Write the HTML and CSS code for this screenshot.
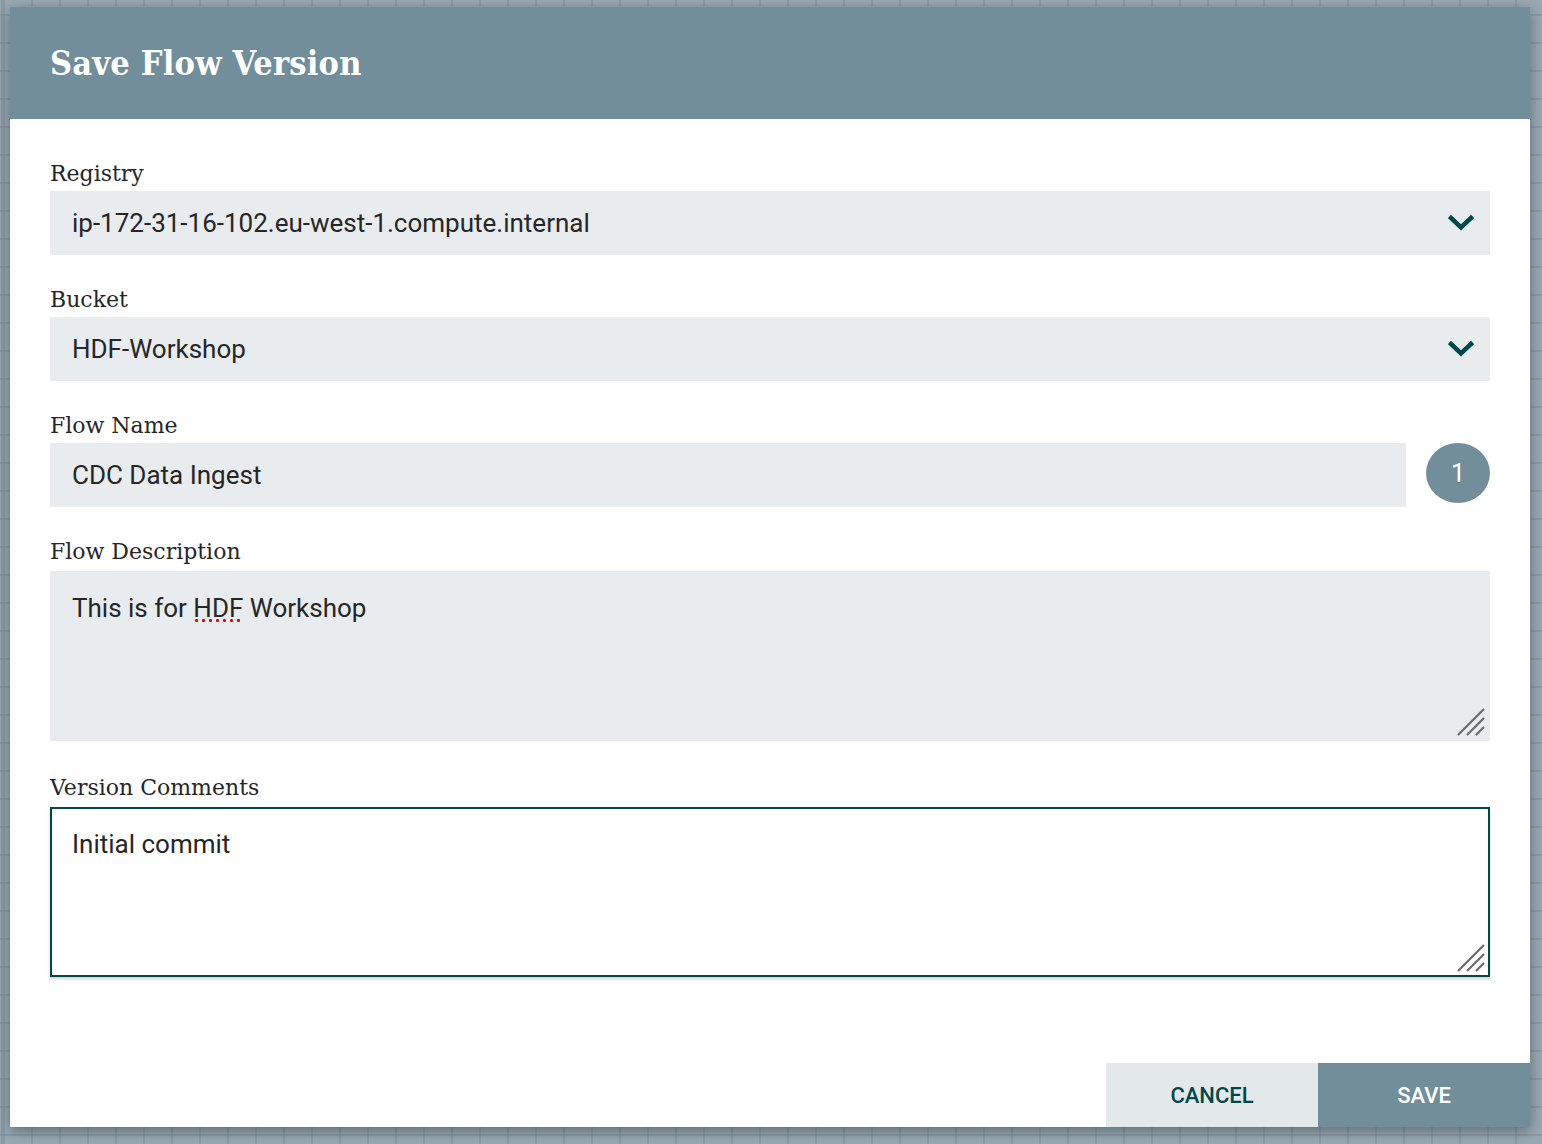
FILE: index.html
```html
<!DOCTYPE html>
<html>
<head>
<meta charset="utf-8">
<title>Save Flow Version</title>
<link rel="stylesheet" href="styles.css">
</head>
<body>
<div class="dialog">
  <div class="dialog-header">Save Flow Version</div>
  <div class="dialog-body">
    <div class="field">
      <div class="label">Registry</div>
      <div class="select">
        <span>ip-172-31-16-102.eu-west-1.compute.internal</span>
        <svg class="chev" width="26" height="18" viewBox="0 0 26 18"><path d="M3 4 L13 13.5 L23 4" fill="none" stroke="#004849" stroke-width="4.5" stroke-linecap="square"/></svg>
      </div>
    </div>
    <div class="field">
      <div class="label">Bucket</div>
      <div class="select">
        <span>HDF-Workshop</span>
        <svg class="chev" width="26" height="18" viewBox="0 0 26 18"><path d="M3 4 L13 13.5 L23 4" fill="none" stroke="#004849" stroke-width="4.5" stroke-linecap="square"/></svg>
      </div>
    </div>
    <div class="field">
      <div class="label">Flow Name</div>
      <div class="row">
        <div class="input">CDC Data Ingest</div>
        <div class="badge">1</div>
      </div>
    </div>
    <div class="field field-tall">
      <div class="label label-area">Flow Description</div>
      <div class="textarea">This is for <span class="misspelled">HDF</span> Workshop
        <svg class="grip" width="30" height="30" viewBox="0 0 30 30"><path d="M28 2 L2 28 M28 11 L11 28 M28 20 L20 28" stroke="#6b6b6b" stroke-width="2.2" fill="none"/></svg>
      </div>
    </div>
    <div class="field">
      <div class="label label-area">Version Comments</div>
      <div class="textarea focused">Initial commit
        <svg class="grip" width="30" height="30" viewBox="0 0 30 30"><path d="M28 2 L2 28 M28 11 L11 28 M28 20 L20 28" stroke="#6b6b6b" stroke-width="2.2" fill="none"/></svg>
      </div>
    </div>
  </div>
  <div class="dialog-footer">
    <div class="btn cancel">CANCEL</div>
    <div class="btn save">SAVE</div>
  </div>
</div>
</body>
</html>
```

FILE: styles.css
```css
html, body {
  margin: 0;
  padding: 0;
}
body {
  width: 1542px;
  height: 1144px;
  overflow: hidden;
  background-color: #9aaab4;
  background-image:
    repeating-linear-gradient(to right, rgba(120,138,150,0.45) 0 2px, transparent 2px 28px),
    repeating-linear-gradient(to bottom, rgba(120,138,150,0.45) 0 2px, transparent 2px 28px);
  background-position: 3px 14px;
  font-family: Roboto, "Liberation Sans", sans-serif;
  color: #262626;
}
.dialog {
  margin: 7px 0 0 10px;
  width: 1520px;
  height: 1120px;
  background: #fff;
  display: flex;
  flex-direction: column;
  box-shadow: 0 4px 14px rgba(40, 55, 65, 0.55);
}
.dialog-header {
  height: 112px;
  flex: none;
  background: #728e9b;
  color: #fff;
  display: flex;
  align-items: center;
  padding-left: 40px;
  font-family: "DejaVu Serif Condensed", "DejaVu Serif", serif;
  font-weight: bold;
  font-size: 34px;
  letter-spacing: 0.2px;
}
.dialog-body {
  flex: 1;
  padding: 38px 40px 0 40px;
}
.field {
  margin-bottom: 28px;
}
.field-tall {
  margin-bottom: 30px;
}
.label {
  height: 28px;
  line-height: 28px;
  margin: 0 0 6px 0;
  font-family: "DejaVu Serif", serif;
  font-size: 22px;
  color: #262626;
  position: relative;
  top: 3px;
}
.label-area {
  margin-bottom: 8px;
}
.select, .input {
  height: 64px;
  background: #e8ecef;
  display: flex;
  align-items: center;
  padding: 0 22px;
  font-size: 26px;
  box-sizing: border-box;
}
.select {
  justify-content: space-between;
  padding-right: 16px;
}
.row {
  display: flex;
  align-items: flex-start;
  gap: 20px;
  height: 64px;
}
.input {
  flex: 1;
}
.badge {
  width: 64px;
  height: 60px;
  border-radius: 50%;
  background: #728e9b;
  color: #fff;
  font-size: 25px;
  display: flex;
  align-items: center;
  justify-content: center;
  flex: none;
}
.textarea {
  position: relative;
  height: 170px;
  box-sizing: border-box;
  background: #e8ecef;
  border: 2px solid transparent;
  padding: 18px 20px;
  font-size: 26px;
  line-height: 34px;
}
.textarea.focused {
  background: #fff;
  border-color: #004849;
  box-shadow: 0 2px 3px rgba(0, 0, 0, 0.18);
}
.misspelled {
  background-image: radial-gradient(circle, #e00000 1.3px, transparent 1.7px);
  background-repeat: repeat-x;
  background-size: 7px 5px;
  background-position: 0 100%;
}
.grip {
  position: absolute;
  right: 2px;
  bottom: 2px;
}
.dialog-footer {
  display: flex;
  justify-content: flex-end;
  flex: none;
}
.btn {
  width: 212px;
  height: 64px;
  display: flex;
  align-items: center;
  justify-content: center;
  font-size: 22px;
  font-weight: 500;
}
.cancel {
  background: #e3e8eb;
  color: #004849;
}
.save {
  background: #728e9b;
  color: #fff;
}
```
